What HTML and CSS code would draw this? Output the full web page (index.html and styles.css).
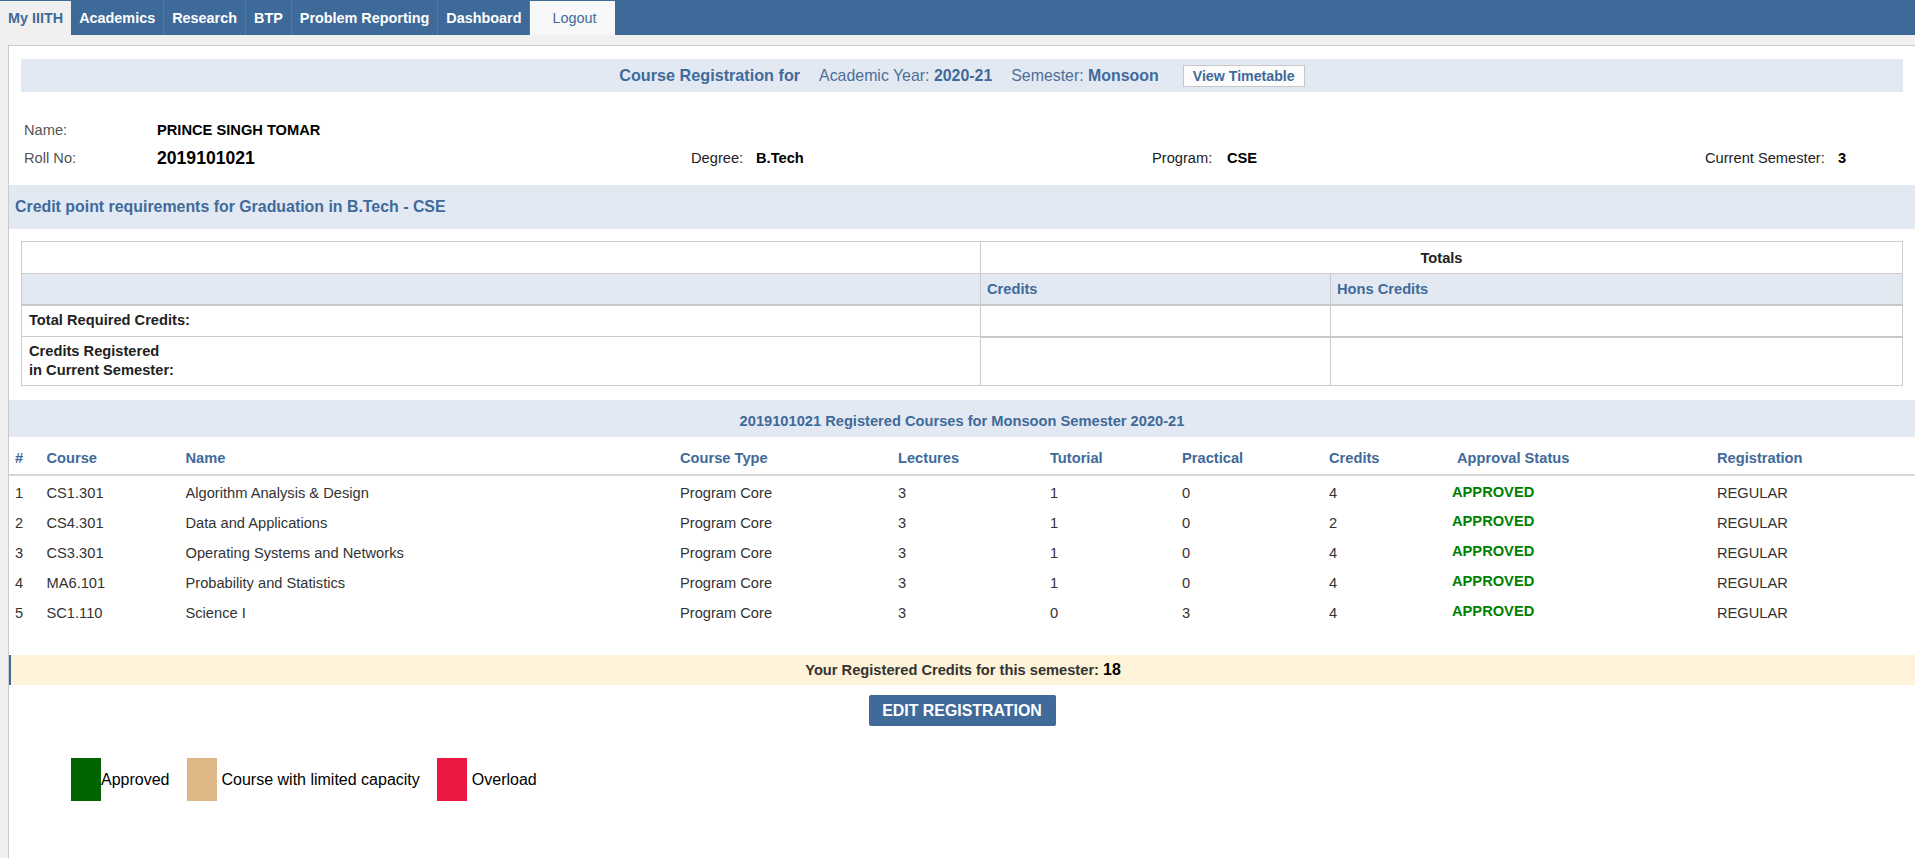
FILE: index.html
```html
<!DOCTYPE html>
<html lang="en">
<head>
<meta charset="utf-8">
<title>Course Registration</title>
<link rel="stylesheet" href="styles.css">
</head>
<body>
<nav class="topnav">
  <ul class="tabs">
    <li class="tab tab-active">My IIITH</li>
    <li class="tab">Academics</li>
    <li class="tab">Research</li>
    <li class="tab">BTP</li>
    <li class="tab">Problem Reporting</li>
    <li class="tab">Dashboard</li>
    <li class="tab tab-logout">Logout</li>
  </ul>
</nav>

<div class="page">
  <div class="reg-head">
    <span class="reg-title">Course Registration for</span><span class="reg-item">Academic Year: <b>2020-21</b></span><span class="reg-item">Semester: <b>Monsoon</b></span><button class="btn-timetable">View Timetable</button>
  </div>

  <div class="info">
    <span class="lbl lbl-gray">Name:</span><span class="val val-name">PRINCE SINGH TOMAR</span>
    <span class="lbl lbl-gray">Roll No:</span><span class="val val-roll">2019101021</span>
    <span class="lbl">Degree:</span><span class="val">B.Tech</span>
    <span class="lbl">Program:</span><span class="val">CSE</span>
    <span class="lbl">Current Semester:</span><span class="val">3</span>
  </div>

  <div class="credit-band">Credit point requirements for Graduation in B.Tech - CSE</div>

  <table class="credit-table">
    <colgroup><col class="cc1"><col class="cc2"><col class="cc3"></colgroup>
    <tr class="r-totals"><td></td><th colspan="2" class="totals">Totals</th></tr>
    <tr class="r-head"><td></td><th class="hd">Credits</th><th class="hd">Hons Credits</th></tr>
    <tr class="r-req"><th class="rowlbl">Total Required Credits:</th><td></td><td></td></tr>
    <tr class="r-reg"><th class="rowlbl">Credits Registered<br>in Current Semester:</th><td class="thick"></td><td class="thick"></td></tr>
  </table>

  <div class="course-band">2019101021 Registered Courses for Monsoon Semester 2020-21</div>

  <table class="course-table">
    <colgroup>
      <col class="k1"><col class="k2"><col class="k3"><col class="k4"><col class="k5">
      <col class="k6"><col class="k7"><col class="k8"><col class="k9"><col class="k10">
    </colgroup>
    <thead>
      <tr><th>#</th><th>Course</th><th>Name</th><th>Course Type</th><th>Lectures</th><th>Tutorial</th><th>Practical</th><th>Credits</th><th class="th-appr">Approval Status</th><th>Registration</th></tr>
    </thead>
    <tbody>
      <tr><td>1</td><td>CS1.301</td><td>Algorithm Analysis &amp; Design</td><td>Program Core</td><td>3</td><td>1</td><td>0</td><td>4</td><td><span class="approved">APPROVED</span></td><td>REGULAR</td></tr>
      <tr><td>2</td><td>CS4.301</td><td>Data and Applications</td><td>Program Core</td><td>3</td><td>1</td><td>0</td><td>2</td><td><span class="approved">APPROVED</span></td><td>REGULAR</td></tr>
      <tr><td>3</td><td>CS3.301</td><td>Operating Systems and Networks</td><td>Program Core</td><td>3</td><td>1</td><td>0</td><td>4</td><td><span class="approved">APPROVED</span></td><td>REGULAR</td></tr>
      <tr><td>4</td><td>MA6.101</td><td>Probability and Statistics</td><td>Program Core</td><td>3</td><td>1</td><td>0</td><td>4</td><td><span class="approved">APPROVED</span></td><td>REGULAR</td></tr>
      <tr><td>5</td><td>SC1.110</td><td>Science I</td><td>Program Core</td><td>3</td><td>0</td><td>3</td><td>4</td><td><span class="approved">APPROVED</span></td><td>REGULAR</td></tr>
    </tbody>
  </table>

  <div class="total-band">Your Registered Credits for this semester: <span class="total-num">18</span></div>

  <div class="btn-row"><button class="btn-edit">EDIT REGISTRATION</button></div>

  <div class="legend">
    <span class="sw sw-green"></span><span class="lg lg-first">Approved</span>
    <span class="sw sw-tan"></span><span class="lg">Course with limited capacity</span>
    <span class="sw sw-red"></span><span class="lg">Overload</span>
  </div>
</div>
</body>
</html>
```
FILE: styles.css
```css
* { box-sizing: border-box; }
html, body { margin: 0; padding: 0; }
body {
  background: #f0f0f0;
  font-family: "Liberation Sans", Arial, Helvetica, sans-serif;
  font-size: 14.66px;
  color: #333;
  overflow: hidden;
}

/* top navigation */
.topnav {
  background: #3e6a99;
  height: 35px;
}
.tabs {
  list-style: none;
  margin: 0;
  padding: 0;
  display: flex;
  height: 35px;
}
.tab {
  display: flex;
  align-items: center;
  padding: 0 8px;
  border-right: 1px solid #5479a4;
  color: #fff;
  font-weight: bold;
  font-size: 14.4px;
}
.tab-active {
  background: #f0f0f0;
  color: #3f6a9a;
  margin-top: 1px;
  border-right: 0;
}
.tab-logout {
  background: #f8f8f8;
  color: #3f6a9a;
  font-weight: normal;
  padding: 0 18px 0 22px;
  margin-top: 1px;
  border-right: 0;
}

/* main panel */
.page {
  margin: 10px 0 0 8px;
  border: 1px solid #ccc;
  border-right: 0;
  background: #fff;
  min-height: 900px;
}

.reg-head {
  margin: 13px 12px 0 12px;
  height: 33px;
  background: #e3e9f3;
  display: flex;
  justify-content: center;
  align-items: center;
  font-size: 15.9px;
  color: #4c6f98;
  white-space: pre;
}
.reg-title { font-weight: bold; color: #3f6a9a; font-size: 16.2px; }
.reg-item { margin-left: 19px; }
.reg-item b { color: #3f6a9a; }
.btn-timetable {
  margin-left: 24px;
  height: 22px;
  width: 122px;
  padding: 0;
  background: #fcfcfc;
  border: 1px solid #c8c8c8;
  border-radius: 0;
  font-family: inherit;
  font-weight: bold;
  font-size: 14.2px;
  color: #3f6a9a;
}

/* student info */
.info {
  display: grid;
  grid-template-columns: 133px 534px 65px 396px 75px 478px 133px 1fr;
  grid-auto-rows: 28px;
  align-items: center;
  padding: 24px 0 0 15px;
  margin-bottom: 13px;
  color: #222;
}
.info .val-name { grid-column: 2 / 9; }
.lbl { color: #222; }
.lbl-gray { color: #555; }
.val { font-weight: bold; color: #000; }
.val-roll { font-size: 17.6px; }

.credit-band {
  height: 44px;
  background: #e3e9f3;
  display: flex;
  align-items: center;
  padding-left: 6px;
  font-weight: bold;
  font-size: 15.9px;
  color: #3f6a9a;
}

/* credit table */
.credit-table {
  margin: 12px 12px 0 12px;
  width: calc(100% - 24px);
  border-collapse: collapse;
  table-layout: fixed;
}
.cc1 { width: 959px; }
.cc2 { width: 350px; }
.credit-table td, .credit-table th {
  border: 1px solid #ccc;
  padding: 0 7px;
  text-align: left;
  vertical-align: middle;
}
.r-totals td, .r-totals th { height: 32px; }
.r-head td, .r-head th { height: 31px; background: #e3e9f3; border-bottom: 2px solid #c8c8c8; }
.r-req td, .r-req th { height: 32px; }
.r-reg td, .r-reg th { height: 49px; }
.credit-table .totals { text-align: center; color: #222; }
.credit-table .hd { color: #3f6a9a; padding-left: 6px; }
.credit-table .rowlbl { color: #222; line-height: 19px; padding-left: 7px; }
.credit-table .thick { border-top: 2px solid #c8c8c8; }

.course-band {
  margin-top: 14px;
  height: 37px;
  background: #e3e9f3;
  display: flex;
  align-items: center;
  justify-content: center;
  padding-top: 5px;
  font-weight: bold;
  color: #3f6a9a;
}

/* course table */
.course-table {
  width: 100%;
  border-collapse: collapse;
  table-layout: fixed;
}
.k1 { width: 31.5px; }
.k2 { width: 139px; }
.k3 { width: 494.5px; }
.k4 { width: 218px; }
.k5 { width: 152px; }
.k6 { width: 132px; }
.k7 { width: 147px; }
.k8 { width: 123px; }
.k9 { width: 265px; }
.course-table th {
  height: 38px;
  padding: 5px 0 0 6px;
  text-align: left;
  color: #3f6a9a;
  font-weight: bold;
  border-bottom: 2px solid #d6d6d6;
}
.course-table .th-appr { padding-left: 11px; }
.course-table td {
  height: 30px;
  padding: 5px 0 0 6px;
  color: #333;
  white-space: nowrap;
}
.approved {
  color: #008000;
  font-weight: bold;
  vertical-align: 3px;
}

.total-band {
  margin-top: 30px;
  height: 30px;
  background: #fef2d8;
  border-left: 2px solid #3f6a9a;
  display: flex;
  align-items: center;
  justify-content: center;
  font-weight: bold;
  color: #333;
  white-space: pre;
}
.total-num { font-size: 15.9px; color: #000; }

.btn-row {
  display: flex;
  justify-content: center;
  margin-top: 10px;
}
.btn-edit {
  width: 187px;
  height: 31px;
  padding: 0;
  border: 0;
  border-radius: 2px;
  background: #3f6a9a;
  color: #fff;
  font-family: inherit;
  font-weight: bold;
  font-size: 15.9px;
}

.legend {
  display: flex;
  align-items: center;
  margin: 32px 0 0 62px;
  font-size: 16px;
  color: #000;
}
.sw { width: 30px; height: 43px; display: block; }
.sw-green { background: #006400; }
.sw-tan { background: #deb887; }
.sw-red { background: #eb1941; }
.lg { margin-right: 17px; margin-left: 5px; }
.lg-first { margin-left: 0; }
```
